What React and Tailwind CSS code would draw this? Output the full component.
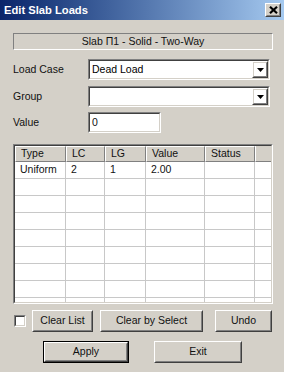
import { useState } from 'react';

const font = { fontFamily: '"Liberation Sans", "DejaVu Sans", sans-serif' };

const cols = [
  { key: 'type', label: 'Type', w: 'w-[51px]' },
  { key: 'lc', label: 'LC', w: 'w-[39px]' },
  { key: 'lg', label: 'LG', w: 'w-[41px]' },
  { key: 'value', label: 'Value', w: 'w-[59px]' },
  { key: 'status', label: 'Status', w: 'w-[50px]' },
];

const rows = [{ type: 'Uniform', lc: '2', lg: '1', value: '2.00', status: '' }];

function Raised({ children, className = '', isDefault = false }) {
  const inner = (
    <div className="h-full w-full border border-t-white border-l-white border-b-[#404040] border-r-[#404040]">
      <div className="h-full w-full flex items-center justify-center border border-t-[#d4d0c8] border-l-[#d4d0c8] border-b-[#808080] border-r-[#808080]">
        {children}
      </div>
    </div>
  );
  if (isDefault) {
    return <button className={`border border-black p-0 ${className}`}>{inner}</button>;
  }
  return <button className={`p-0 ${className}`}>{inner}</button>;
}

function Sunken({ children, className = '' }) {
  return (
    <div className={`border border-t-[#808080] border-l-[#808080] border-b-white border-r-white ${className}`}>
      <div className="h-full w-full border border-t-[#404040] border-l-[#404040] border-b-[#d4d0c8] border-r-[#d4d0c8] bg-white">
        {children}
      </div>
    </div>
  );
}

function Combo({ value }) {
  return (
    <Sunken className="w-[182px] h-[21px]">
      <div className="flex h-full">
        <div className="flex-1 pl-[2px] flex items-center text-black">{value}</div>
        <Raised className="w-[16px] h-full">
          <svg width="7" height="4" viewBox="0 0 7 4">
            <path d="M0 0H7L3.5 4Z" fill="#000" />
          </svg>
        </Raised>
      </div>
    </Sunken>
  );
}

export default function App() {
  const [checked, setChecked] = useState(false);
  const blank = Array.from({ length: 8 });

  return (
    <div className="w-[284px] h-[372px] bg-[#d4d0c8] text-[10.5px] text-[#111] overflow-hidden" style={font}>
      <div className="h-[20px] flex items-center justify-between pl-[4px] pr-[3px] bg-gradient-to-r from-[#0a246a] to-[#a6caf0]">
        <span className="text-white font-bold text-[11.2px]">Edit Slab Loads</span>
        <Raised className="w-[16px] h-[14px] bg-[#d4d0c8]">
          <svg width="9" height="8" viewBox="0 0 9 8">
            <path d="M1 0.8L8 7.2M8 0.8L1 7.2" stroke="#000" strokeWidth="2.2" />
          </svg>
        </Raised>
      </div>

      <div className="pl-[13px] pr-[11px]">
        <div className="mt-[13px] h-[17px] w-[260px] border border-t-[#808080] border-l-[#808080] border-b-white border-r-white flex items-center justify-center">
          Slab П1 - Solid - Two-Way
        </div>

        <div className="mt-[9px] flex items-center h-[21px]">
          <span className="w-[75px]">Load Case</span>
          <Combo value="Dead Load" />
        </div>

        <div className="mt-[6px] flex items-center h-[21px]">
          <span className="w-[75px]">Group</span>
          <Combo value="" />
        </div>

        <div className="mt-[5px] flex items-center h-[21px]">
          <span className="w-[75px]">Value</span>
          <Sunken className="w-[73px] h-[21px]">
            <div className="h-full pl-[2px] flex items-center">0</div>
          </Sunken>
        </div>

        <Sunken className="mt-[11px] w-[260px] h-[160px]">
          <div className="h-full overflow-hidden">
            <div className="flex h-[16px] bg-[#d4d0c8]">
              {cols.map((c) => (
                <div
                  key={c.key}
                  className={`${c.w} h-full pl-[5px] flex items-center border-r border-b border-r-[#808080] border-b-[#808080] border-t border-l border-t-white border-l-white`}
                >
                  {c.label}
                </div>
              ))}
              <div className="flex-1 bg-[#d4d0c8] border-b border-b-[#808080] border-l border-l-white" />
            </div>
            {rows.map((r, i) => (
              <div key={i} className="flex h-[17px] border-b border-[#c8c8c8]">
                {cols.map((c) => (
                  <div key={c.key} className={`${c.w} h-full pl-[5px] flex items-center border-r border-[#c8c8c8]`}>
                    {r[c.key]}
                  </div>
                ))}
                <div className="flex-1" />
              </div>
            ))}
            {blank.map((_, i) => (
              <div key={i} className="flex h-[17px] border-b border-[#c8c8c8]">
                {cols.map((c) => (
                  <div key={c.key} className={`${c.w} h-full border-r border-[#c8c8c8]`} />
                ))}
                <div className="flex-1" />
              </div>
            ))}
          </div>
        </Sunken>

        <div className="mt-[6px] flex items-center h-[22px]">
          <button
            onClick={() => setChecked(!checked)}
            className="ml-[1px] w-[12px] h-[12px] p-0 border border-t-[#808080] border-l-[#808080] border-b-white border-r-white"
          >
            <div className="w-full h-full bg-white border border-t-[#404040] border-l-[#404040] border-b-[#d4d0c8] border-r-[#d4d0c8]" />
          </button>
          <Raised className="ml-[6px] w-[61px] h-[22px]">Clear List</Raised>
          <Raised className="ml-[7px] w-[103px] h-[22px]">Clear by Select</Raised>
          <Raised className="ml-[12px] w-[57px] h-[22px]">Undo</Raised>
        </div>

        <div className="mt-[9px] flex items-center h-[22px]">
          <Raised isDefault className="ml-[30px] w-[86px] h-[22px]">Apply</Raised>
          <Raised className="ml-[25px] w-[88px] h-[22px]">Exit</Raised>
        </div>
      </div>
    </div>
  );
}
